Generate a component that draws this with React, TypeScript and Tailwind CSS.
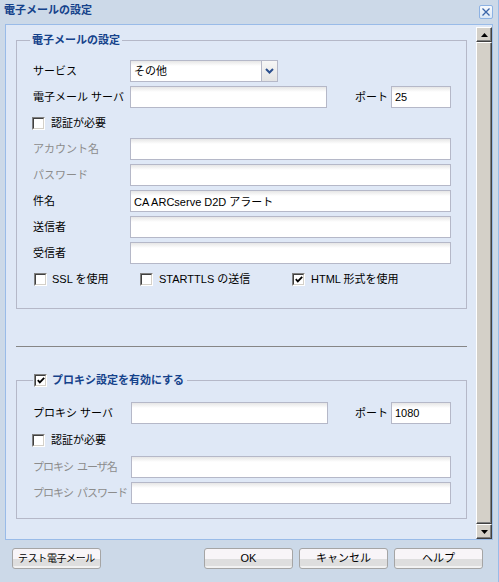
const CheckBox = ({ checked = false }: { checked?: boolean }) => (
  <span className="inline-flex h-[13px] w-[13px] shrink-0 border border-t-[#808080] border-l-[#808080] border-b-white border-r-white">
    <span className="flex flex-1 items-center justify-center border border-t-[#404040] border-l-[#404040] border-b-[#d4d0c8] border-r-[#d4d0c8] bg-white">
      {checked && (
        <svg width="8" height="7" viewBox="0 0 8 7">
          <polyline points="0.8,3.2 2.8,5.4 7.2,0.8" fill="none" stroke="#000" strokeWidth="1.8" />
        </svg>
      )}
    </span>
  </span>
)

const TextInput = ({ w, value = '' }: { w: string; value?: string }) => (
  <input
    readOnly
    value={value}
    className={`h-[22px] shrink-0 border border-[#b5b8c8] bg-[linear-gradient(to_bottom,#e6e6e6,#ffffff_5px)] pl-[3px] text-[11px] text-black outline-none ${w}`}
  />
)

const Row = ({
  label,
  disabled = false,
  wide,
  tight,
  children,
}: {
  label: string
  disabled?: boolean
  wide?: boolean
  tight?: boolean
  children: React.ReactNode
}) => (
  <div className="flex h-[22px] items-center">
    <span
      className={`${wide ? 'w-[98px]' : 'w-[97px]'} flex shrink-0 ${tight ? 'gap-[4px] tracking-[-1px]' : ''} ${
        disabled ? 'text-[#8c8c8c]' : 'text-black'
      }`}
    >
      {tight ? label.split(' ').map((part) => <span key={part}>{part}</span>) : label}
    </span>
    {children}
  </div>
)

const Btn = ({ children, tight }: { children: React.ReactNode; tight?: boolean }) => (
  <button
    className={`h-[21px] w-[89px] rounded-[3px] border border-[#a5a5a5] bg-[linear-gradient(to_bottom,#f8f5f8_52%,#dedede_52%,#dedede_88%,#f2f2f2_88%)] leading-[19px] text-black ${
      tight ? 'text-[10px] tracking-[-0.4px]' : 'text-[11px]'
    }`}
  >
    {children}
  </button>
)

const ScrollBtn = ({ up }: { up?: boolean }) => (
  <div className="flex h-[15px] shrink-0 items-center justify-center border border-t-white border-l-white border-b-[#404040] border-r-[#404040] bg-[#d4d0c8] shadow-[inset_-1px_-1px_#808080]">
    <svg width="7" height="4" viewBox="0 0 7 4">
      <path d={up ? 'M0 4 L3.5 0 L7 4Z' : 'M0 0 L3.5 4 L7 0Z'} fill="#000" />
    </svg>
  </div>
)

export default function App() {
  return (
    <div className="h-[582px] w-[499px] whitespace-nowrap border-r border-[#99bbe8] bg-[#ccd9e8] font-['Liberation_Sans','Noto_Sans_CJK_JP',sans-serif] text-[11px] text-black">
      {/* title bar */}
      <div className="flex h-[24px] items-start justify-between pl-[4px] pr-[5px]">
        <span className="pt-[3px] text-[11px] font-bold leading-[14px] text-[#15428b]">電子メールの設定</span>
        <span className="mt-[5px] flex h-[14px] w-[14px] items-center justify-center rounded-[2px] border border-[#8db2e3] bg-[linear-gradient(to_bottom,#f6f9fd,#dbe7f6)]">
          <svg width="10" height="10" viewBox="0 0 10 10">
            <path d="M1.5 1.5 L8.5 8.5 M8.5 1.5 L1.5 8.5" stroke="#3a64a8" strokeWidth="1.3" />
          </svg>
        </span>
      </div>

      {/* body panel */}
      <div className="ml-[5px] flex h-[516px] w-[488px] border border-[#99bbe8] bg-[#dfe8f6]">
        <div className="flex-1 pl-[10px]">
          <fieldset className="mt-[8px] w-[451px] border border-[#b5b8c8] pb-[18px] pl-[16px] pr-[15px] pt-[13px]">
            <legend className="-ml-[3px] px-[2px] text-[11px] font-bold leading-[14px] text-[#15428b]">電子メールの設定</legend>
            <div className="flex flex-col gap-[4px]">
              <Row label="サービス">
                <div className="flex h-[22px] w-[148px] border border-[#b5b8c8] bg-white">
                  <span className="flex-1 bg-[linear-gradient(to_bottom,#e6e6e6,#ffffff_5px)] pl-[3px] leading-[20px]">その他</span>
                  <span className="flex w-[16px] items-center justify-center border-l border-[#b5b8c8] bg-[linear-gradient(to_bottom,#f6f6f6,#e4e4e4)]">
                    <svg width="9" height="6" viewBox="0 0 9 6">
                      <polyline points="1,1 4.5,4.5 8,1" fill="none" stroke="#2b4f8e" strokeWidth="2" />
                    </svg>
                  </span>
                </div>
              </Row>
              <Row label="電子メール サーバ">
                <TextInput w="w-[197px]" />
                <span className="ml-[28px] w-[36px] shrink-0">ポート</span>
                <TextInput w="w-[60px]" value="25" />
              </Row>
              <div className="-ml-[1px] flex h-[22px] items-center gap-[6px]">
                <CheckBox />
                <span>認証が必要</span>
              </div>
              <Row label="アカウント名" disabled>
                <TextInput w="w-[321px]" />
              </Row>
              <Row label="パスワード" disabled>
                <TextInput w="w-[321px]" />
              </Row>
              <Row label="件名">
                <TextInput w="w-[321px]" value="CA ARCserve D2D アラート" />
              </Row>
              <Row label="送信者">
                <TextInput w="w-[321px]" />
              </Row>
              <Row label="受信者">
                <TextInput w="w-[321px]" />
              </Row>
              <div className="ml-[1px] flex h-[22px] items-center">
                <div className="flex w-[106px] items-center gap-[5px]">
                  <CheckBox />
                  <span>SSL を使用</span>
                </div>
                <div className="flex w-[152px] items-center gap-[6px]">
                  <CheckBox />
                  <span>STARTTLS の送信</span>
                </div>
                <div className="flex items-center gap-[6px]">
                  <CheckBox checked />
                  <span>HTML 形式を使用</span>
                </div>
              </div>
            </div>
          </fieldset>

          <div className="mt-[37px] h-px w-[451px] bg-[#868686]" />

          <fieldset className="mt-[26px] w-[451px] border border-[#b5b8c8] pb-[14px] pl-[16px] pr-[15px] pt-[15px]">
            <legend className="pl-[1px] pr-[3px] text-[11px] leading-[14px]">
              <span className="inline-flex items-center gap-[5px] align-top">
                <CheckBox checked />
                <span className="font-bold text-[#15428b]">プロキシ設定を有効にする</span>
              </span>
            </legend>
            <div className="flex flex-col gap-[4px]">
              <Row label="プロキシ サーバ" wide>
                <TextInput w="w-[197px]" />
                <span className="ml-[27px] w-[36px] shrink-0">ポート</span>
                <TextInput w="w-[60px]" value="1080" />
              </Row>
              <div className="-ml-[1px] flex h-[24px] items-center gap-[6px]">
                <CheckBox />
                <span>認証が必要</span>
              </div>
              <Row label="プロキシ ユーザ名" disabled wide tight>
                <TextInput w="w-[320px]" />
              </Row>
              <Row label="プロキシ パスワード" disabled wide tight>
                <TextInput w="w-[320px]" />
              </Row>
            </div>
          </fieldset>
        </div>

        {/* scrollbar */}
        <div className="flex w-[16px] flex-col pt-[2px]">
          <ScrollBtn up />
          <div className="flex-1 border border-t-white border-l-white border-b-[#404040] border-r-[#404040] bg-[#d4d0c8] shadow-[inset_-1px_-1px_#808080]" />
          <ScrollBtn />
        </div>
      </div>

      {/* buttons */}
      <div className="mt-[8px] flex pl-[12px] pr-[15px]">
        <Btn tight>テスト電子メール</Btn>
        <div className="ml-auto flex gap-[6px]">
          <Btn>OK</Btn>
          <Btn>キャンセル</Btn>
          <Btn>ヘルプ</Btn>
        </div>
      </div>
    </div>
  )
}
